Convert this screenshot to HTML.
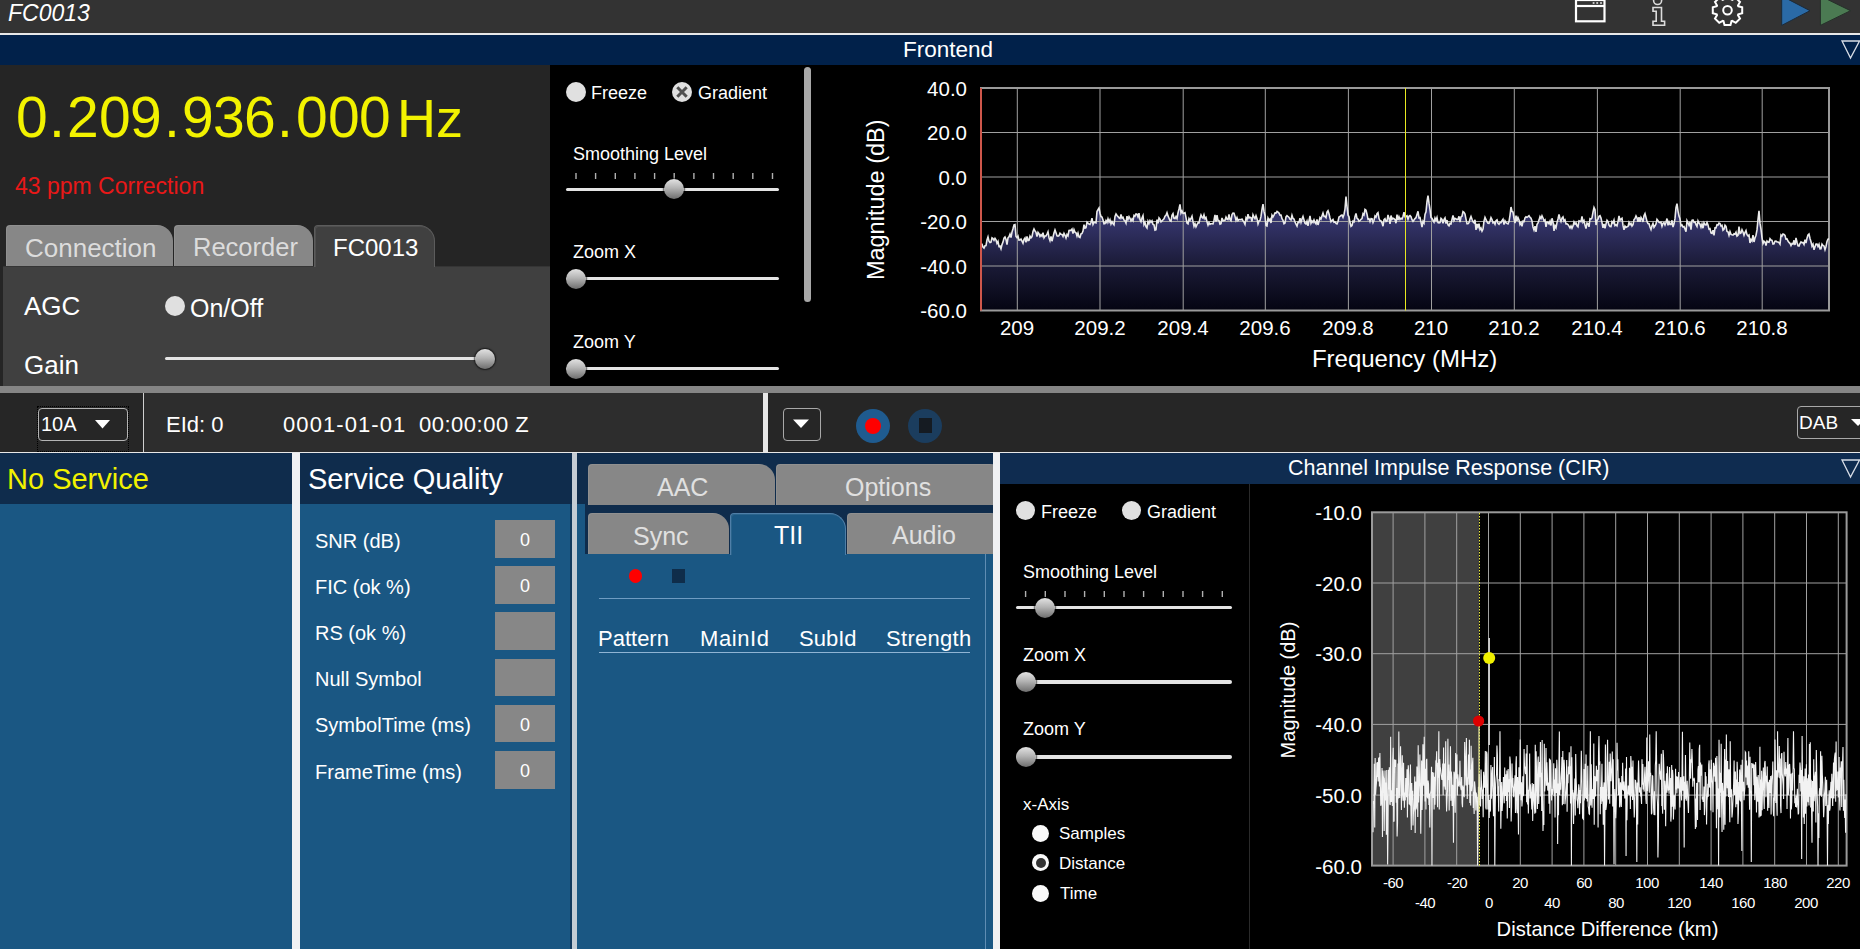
<!DOCTYPE html>
<html><head><meta charset="utf-8">
<style>
*{margin:0;padding:0;box-sizing:border-box}
html,body{width:1860px;height:949px;overflow:hidden;background:#000;font-family:"Liberation Sans",sans-serif;color:#fff}
.a{position:absolute}
.t{position:absolute;white-space:nowrap;line-height:1}
.thumb{position:absolute;width:20px;height:20px;border-radius:50%;background:linear-gradient(#e2e2e2 0%,#b4b4b4 45%,#6e6e6e 100%);box-shadow:0 0 1.5px 1px rgba(0,0,0,.6)}
.track{position:absolute;height:3.4px;background:#e4e4e4;border-radius:2px}
.radio{position:absolute;width:20px;height:20px;border-radius:50%;background:#e0e0e0}
.tab{position:absolute;border-radius:4px 16px 0 0;box-shadow:inset 1px 1px 0 rgba(255,255,255,.08)}
</style></head><body>
<!-- title bar -->
<div class="a" style="left:0;top:0;width:1860px;height:33px;background:#333333"></div>
<div class="t" style="left:8px;top:2px;font-size:23px;font-style:italic">FC0013</div>
<div class="a" style="left:0;top:33px;width:1860px;height:2px;background:#e8e8e8"></div>
<!-- frontend header -->
<div class="a" style="left:0;top:35px;width:1860px;height:30px;background:#01214a"></div>
<div class="t" style="left:903px;top:39px;font-size:22.5px">Frontend</div>

<!-- top left panel -->
<div class="a" style="left:0;top:65px;width:550px;height:321px;background:#252525"></div>
<div class="a" id="freq" style="left:0;top:0;color:#f2f200;font-size:57px"><span class="t" style="left:16px;top:89px">0</span><span class="t" style="left:49px;top:89px">.</span><span class="t" style="left:67px;top:89px">2</span><span class="t" style="left:99px;top:89px">0</span><span class="t" style="left:130px;top:89px">9</span><span class="t" style="left:164px;top:89px">.</span><span class="t" style="left:182px;top:89px">9</span><span class="t" style="left:213px;top:89px">3</span><span class="t" style="left:244px;top:89px">6</span><span class="t" style="left:277px;top:89px">.</span><span class="t" style="left:296px;top:89px">0</span><span class="t" style="left:328px;top:89px">0</span><span class="t" style="left:359px;top:89px">0</span><span class="t" style="left:397px;top:91px;font-size:54px">Hz</span></div>
<div class="t" style="left:15px;top:174.5px;font-size:23px;color:#e81818">43 ppm Correction</div>

<div class="tab" style="left:6px;top:225px;width:167px;height:42px;background:#878787"></div>
<div class="t" style="left:25px;top:234.7px;font-size:26px;color:#dcdcdc">Connection</div>
<div class="tab" style="left:174px;top:225px;width:139px;height:42px;background:#878787"></div>
<div class="t" style="left:193px;top:235px;font-size:25.5px;color:#dcdcdc">Recorder</div>
<div class="a" style="left:3px;top:267px;width:547px;height:119px;background:#404040"></div><div class="a" style="left:3px;top:266px;width:547px;height:1px;background:#353535"></div>
<div class="tab" style="left:314px;top:225px;width:121px;height:42px;background:#404040;border:1px solid #5c5c5c;border-bottom:none"></div>
<div class="t" style="left:333px;top:236.4px;font-size:24px;color:#fff">FC0013</div>

<div class="t" style="left:24px;top:293px;font-size:26px">AGC</div>
<div class="t" style="left:24px;top:351.5px;font-size:26px">Gain</div>
<div class="radio" style="left:165px;top:296px"></div>
<div class="t" style="left:190px;top:296px;font-size:25px">On/Off</div>
<div class="track" style="left:165px;top:357px;width:322px"></div>
<div class="thumb" style="left:475px;top:349px"></div>

<!-- middle controls -->
<div class="a" style="left:550px;top:65px;width:280px;height:321px;background:#000"></div>
<div class="radio" style="left:566px;top:82px"></div>
<div class="t" style="left:591px;top:84px;font-size:18px">Freeze</div>
<div class="radio" style="left:672px;top:82px"></div>
<svg class="a" style="left:672px;top:82px" width="20" height="20"><path d="M5.3 5.3 L14.7 14.7 M14.7 5.3 L5.3 14.7" stroke="#505050" stroke-width="3"/></svg>
<div class="t" style="left:698px;top:84px;font-size:18px">Gradient</div>

<div class="t" style="left:573px;top:145px;font-size:18px">Smoothing Level</div>
<svg class="a" style="left:550px;top:170px" width="240" height="12">
  <g stroke="#b0b0b0" stroke-width="1.4">
  <path d="M26 3v6M45.6 3v6M65.3 3v6M84.9 3v6M104.6 3v6M124.2 3v6M143.9 3v6M163.5 3v6M183.2 3v6M202.8 3v6M222.5 3v6"/>
  </g>
</svg>
<div class="track" style="left:566px;top:188px;width:213px"></div>
<div class="thumb" style="left:664px;top:179px"></div>

<div class="t" style="left:573px;top:242.5px;font-size:18px">Zoom X</div>
<div class="track" style="left:566px;top:277px;width:213px"></div>
<div class="thumb" style="left:566px;top:269px"></div>

<div class="t" style="left:573px;top:333px;font-size:18px">Zoom Y</div>
<div class="track" style="left:566px;top:367px;width:213px"></div>
<div class="thumb" style="left:566px;top:359px"></div>

<div class="a" style="left:804px;top:67px;width:7px;height:235px;background:#a8a8a8;border-radius:4px"></div>

<!-- spectrum -->
<div class="a" style="left:830px;top:65px;width:1030px;height:321px;background:#000"></div>
<svg class="a" style="left:0;top:0" width="1860" height="400">
  <defs>
    <linearGradient id="sg" gradientUnits="userSpaceOnUse" x1="0" y1="88" x2="0" y2="310.5">
      <stop offset="0.5" stop-color="#3a3a76"/>
      <stop offset="0.6" stop-color="#34346a"/>
      <stop offset="0.8" stop-color="#1a1a36"/>
      <stop offset="1" stop-color="#050512"/>
    </linearGradient>
  </defs>
  <path d="M981,310.5 L981,244.1 L982,244.2 L983,247.0 L984,248.0 L985,245.8 L986,245.6 L987,240.0 L988,236.9 L989,241.2 L990,242.5 L991,242.1 L992,237.9 L993,238.6 L994,240.4 L995,238.4 L996,239.9 L997,243.3 L998,241.4 L999,246.5 L1000,246.1 L1001,248.8 L1002,244.6 L1003,242.1 L1004,238.1 L1005,237.0 L1006,239.4 L1007,244.6 L1008,237.9 L1009,236.9 L1010,234.3 L1011,237.6 L1012,232.1 L1013,228.7 L1014,224.8 L1015,224.5 L1016,236.4 L1017,237.7 L1018,236.1 L1019,240.1 L1020,240.0 L1021,239.0 L1022,241.1 L1023,243.2 L1024,239.3 L1025,237.9 L1026,242.3 L1027,236.4 L1028,240.5 L1029,240.3 L1030,236.1 L1031,237.8 L1032,236.7 L1033,231.4 L1034,229.0 L1035,231.0 L1036,232.3 L1037,236.5 L1038,232.3 L1039,233.7 L1040,236.4 L1041,234.8 L1042,236.2 L1043,232.7 L1044,237.8 L1045,236.0 L1046,236.0 L1047,234.0 L1048,231.7 L1049,237.7 L1050,240.6 L1051,236.4 L1052,241.2 L1053,237.1 L1054,233.0 L1055,230.0 L1056,232.7 L1057,235.8 L1058,236.1 L1059,235.6 L1060,233.2 L1061,234.3 L1062,234.5 L1063,236.4 L1064,233.4 L1065,235.3 L1066,237.9 L1067,234.5 L1068,235.8 L1069,230.5 L1070,230.2 L1071,230.3 L1072,229.1 L1073,233.6 L1074,229.6 L1075,232.2 L1076,232.7 L1077,236.1 L1078,233.1 L1079,237.0 L1080,237.6 L1081,233.9 L1082,233.5 L1083,231.0 L1084,224.6 L1085,228.2 L1086,227.7 L1087,222.1 L1088,223.1 L1089,224.0 L1090,224.5 L1091,222.3 L1092,218.1 L1093,224.3 L1094,222.3 L1095,222.4 L1096,222.8 L1097,211.5 L1098,209.6 L1099,208.0 L1100,213.2 L1101,216.6 L1102,217.0 L1103,220.0 L1104,223.8 L1105,223.5 L1106,220.6 L1107,222.6 L1108,218.9 L1109,222.0 L1110,219.7 L1111,223.9 L1112,221.6 L1113,223.5 L1114,224.8 L1115,216.4 L1116,214.0 L1117,215.5 L1118,216.6 L1119,217.9 L1120,218.5 L1121,214.4 L1122,218.2 L1123,217.4 L1124,220.0 L1125,221.0 L1126,223.2 L1127,216.2 L1128,219.4 L1129,216.6 L1130,218.4 L1131,220.8 L1132,218.9 L1133,220.7 L1134,215.4 L1135,216.2 L1136,214.0 L1137,214.2 L1138,216.9 L1139,213.1 L1140,219.7 L1141,221.7 L1142,217.9 L1143,215.6 L1144,224.6 L1145,222.5 L1146,226.7 L1147,228.0 L1148,221.4 L1149,223.6 L1150,220.6 L1151,222.3 L1152,220.9 L1153,224.4 L1154,224.9 L1155,230.1 L1156,229.7 L1157,219.7 L1158,223.4 L1159,217.9 L1160,219.2 L1161,221.9 L1162,220.9 L1163,219.7 L1164,218.7 L1165,216.3 L1166,215.2 L1167,212.7 L1168,215.9 L1169,218.2 L1170,220.7 L1171,221.3 L1172,215.3 L1173,213.6 L1174,218.3 L1175,218.6 L1176,216.6 L1177,218.6 L1178,213.0 L1179,208.9 L1180,204.3 L1181,213.1 L1182,211.0 L1183,213.4 L1184,213.2 L1185,212.7 L1186,217.7 L1187,223.1 L1188,223.8 L1189,218.5 L1190,220.3 L1191,218.5 L1192,216.2 L1193,221.7 L1194,226.2 L1195,223.7 L1196,226.8 L1197,224.7 L1198,222.8 L1199,222.9 L1200,218.3 L1201,215.0 L1202,217.3 L1203,218.1 L1204,214.9 L1205,218.8 L1206,217.5 L1207,221.8 L1208,225.1 L1209,222.6 L1210,224.4 L1211,223.7 L1212,223.7 L1213,223.9 L1214,220.2 L1215,214.9 L1216,221.6 L1217,215.1 L1218,220.4 L1219,220.6 L1220,224.2 L1221,223.7 L1222,217.9 L1223,220.8 L1224,220.4 L1225,220.2 L1226,217.1 L1227,219.1 L1228,219.6 L1229,214.4 L1230,219.6 L1231,220.7 L1232,214.6 L1233,213.1 L1234,213.2 L1235,216.4 L1236,220.3 L1237,217.6 L1238,220.7 L1239,219.5 L1240,219.5 L1241,219.7 L1242,219.1 L1243,220.7 L1244,222.1 L1245,224.3 L1246,217.9 L1247,219.7 L1248,214.1 L1249,218.1 L1250,217.2 L1251,217.7 L1252,221.5 L1253,214.8 L1254,217.0 L1255,218.7 L1256,215.8 L1257,218.7 L1258,223.9 L1259,220.9 L1260,220.4 L1261,216.4 L1262,209.5 L1263,204.1 L1264,211.4 L1265,215.5 L1266,225.5 L1267,226.0 L1268,218.2 L1269,220.4 L1270,219.1 L1271,223.0 L1272,215.2 L1273,216.9 L1274,215.1 L1275,212.9 L1276,213.1 L1277,211.4 L1278,212.2 L1279,213.1 L1280,215.2 L1281,215.1 L1282,218.7 L1283,220.4 L1284,223.7 L1285,223.0 L1286,216.9 L1287,215.7 L1288,216.5 L1289,217.4 L1290,219.3 L1291,220.0 L1292,215.3 L1293,218.4 L1294,219.0 L1295,222.0 L1296,224.2 L1297,226.1 L1298,222.2 L1299,222.5 L1300,218.2 L1301,222.3 L1302,218.9 L1303,216.4 L1304,219.9 L1305,223.2 L1306,224.0 L1307,221.2 L1308,225.9 L1309,220.9 L1310,215.8 L1311,223.2 L1312,221.1 L1313,222.4 L1314,220.0 L1315,222.7 L1316,224.0 L1317,219.3 L1318,224.9 L1319,221.6 L1320,217.7 L1321,219.1 L1322,216.0 L1323,213.1 L1324,216.4 L1325,216.4 L1326,217.6 L1327,212.1 L1328,210.7 L1329,213.7 L1330,218.0 L1331,221.8 L1332,220.6 L1333,219.5 L1334,222.2 L1335,221.9 L1336,223.3 L1337,223.8 L1338,221.5 L1339,217.0 L1340,216.4 L1341,215.5 L1342,215.1 L1343,217.4 L1344,214.5 L1345,209.1 L1346,196.6 L1347,206.5 L1348,215.0 L1349,216.8 L1350,222.8 L1351,226.4 L1352,225.5 L1353,221.2 L1354,221.9 L1355,216.6 L1356,213.4 L1357,218.3 L1358,219.1 L1359,221.3 L1360,220.5 L1361,219.3 L1362,218.6 L1363,213.8 L1364,215.0 L1365,209.5 L1366,210.3 L1367,214.2 L1368,219.3 L1369,218.8 L1370,221.6 L1371,218.6 L1372,218.8 L1373,222.5 L1374,220.2 L1375,216.0 L1376,217.2 L1377,213.7 L1378,212.7 L1379,218.6 L1380,220.6 L1381,221.0 L1382,222.8 L1383,226.2 L1384,219.6 L1385,218.6 L1386,221.5 L1387,221.1 L1388,215.0 L1389,218.1 L1390,223.9 L1391,215.5 L1392,219.3 L1393,218.2 L1394,218.7 L1395,219.6 L1396,223.2 L1397,214.6 L1398,220.1 L1399,216.8 L1400,219.5 L1401,218.3 L1402,219.0 L1403,216.5 L1404,212.3 L1405,216.7 L1406,216.4 L1407,215.8 L1408,219.3 L1409,216.3 L1410,215.5 L1411,216.7 L1412,219.7 L1413,221.4 L1414,220.0 L1415,218.6 L1416,217.7 L1417,214.5 L1418,211.3 L1419,217.9 L1420,217.6 L1421,222.2 L1422,227.1 L1423,221.4 L1424,223.1 L1425,214.5 L1426,211.9 L1427,201.6 L1428,195.6 L1429,203.2 L1430,209.4 L1431,217.5 L1432,218.3 L1433,220.4 L1434,222.2 L1435,218.1 L1436,220.5 L1437,217.6 L1438,222.6 L1439,222.9 L1440,222.6 L1441,218.3 L1442,219.4 L1443,223.4 L1444,219.6 L1445,218.0 L1446,223.5 L1447,220.1 L1448,224.8 L1449,225.8 L1450,223.4 L1451,223.8 L1452,219.5 L1453,215.4 L1454,220.4 L1455,218.3 L1456,218.9 L1457,219.7 L1458,219.3 L1459,216.3 L1460,222.0 L1461,217.0 L1462,216.2 L1463,211.7 L1464,212.4 L1465,214.0 L1466,219.1 L1467,223.7 L1468,223.7 L1469,222.6 L1470,219.1 L1471,216.6 L1472,219.3 L1473,221.7 L1474,222.7 L1475,219.8 L1476,229.8 L1477,223.9 L1478,227.1 L1479,223.7 L1480,229.6 L1481,228.1 L1482,231.1 L1483,229.0 L1484,221.1 L1485,217.4 L1486,219.6 L1487,221.8 L1488,223.2 L1489,223.4 L1490,221.0 L1491,217.6 L1492,219.5 L1493,222.9 L1494,222.2 L1495,224.2 L1496,220.6 L1497,219.8 L1498,223.3 L1499,224.3 L1500,222.5 L1501,222.6 L1502,220.6 L1503,219.2 L1504,224.6 L1505,220.8 L1506,222.6 L1507,223.4 L1508,223.9 L1509,221.6 L1510,215.3 L1511,207.0 L1512,211.5 L1513,212.1 L1514,218.7 L1515,223.2 L1516,215.6 L1517,220.8 L1518,217.5 L1519,219.9 L1520,224.4 L1521,222.6 L1522,226.3 L1523,221.2 L1524,221.7 L1525,217.9 L1526,216.8 L1527,217.4 L1528,216.7 L1529,215.8 L1530,217.2 L1531,218.2 L1532,220.9 L1533,227.0 L1534,230.0 L1535,226.2 L1536,231.8 L1537,224.6 L1538,222.8 L1539,220.1 L1540,216.6 L1541,218.5 L1542,215.9 L1543,218.0 L1544,220.8 L1545,219.9 L1546,226.9 L1547,222.1 L1548,222.3 L1549,223.8 L1550,221.2 L1551,225.5 L1552,218.3 L1553,222.0 L1554,230.8 L1555,225.7 L1556,227.7 L1557,222.6 L1558,219.0 L1559,214.4 L1560,218.8 L1561,221.5 L1562,218.1 L1563,216.9 L1564,221.0 L1565,219.9 L1566,224.0 L1567,223.9 L1568,224.6 L1569,226.2 L1570,228.0 L1571,225.9 L1572,228.3 L1573,226.1 L1574,221.9 L1575,224.0 L1576,222.9 L1577,225.8 L1578,226.8 L1579,220.9 L1580,221.3 L1581,221.7 L1582,216.3 L1583,222.2 L1584,220.6 L1585,225.1 L1586,228.6 L1587,223.0 L1588,223.5 L1589,226.8 L1590,218.6 L1591,219.1 L1592,217.9 L1593,212.2 L1594,207.5 L1595,209.8 L1596,225.0 L1597,220.3 L1598,219.1 L1599,216.2 L1600,215.6 L1601,218.1 L1602,222.7 L1603,227.9 L1604,224.0 L1605,228.4 L1606,223.9 L1607,220.3 L1608,221.7 L1609,225.1 L1610,226.4 L1611,226.6 L1612,221.7 L1613,223.0 L1614,220.1 L1615,225.6 L1616,224.8 L1617,225.9 L1618,221.7 L1619,216.0 L1620,220.3 L1621,219.1 L1622,218.3 L1623,225.4 L1624,229.7 L1625,226.0 L1626,227.4 L1627,226.8 L1628,226.4 L1629,222.5 L1630,224.7 L1631,223.2 L1632,226.0 L1633,224.6 L1634,219.6 L1635,218.5 L1636,216.0 L1637,217.9 L1638,221.8 L1639,217.1 L1640,221.9 L1641,217.3 L1642,219.0 L1643,221.9 L1644,215.8 L1645,213.6 L1646,217.5 L1647,221.4 L1648,223.5 L1649,223.7 L1650,227.0 L1651,229.5 L1652,225.8 L1653,223.5 L1654,227.3 L1655,225.8 L1656,223.9 L1657,219.3 L1658,220.6 L1659,222.4 L1660,222.6 L1661,222.3 L1662,226.2 L1663,223.3 L1664,222.6 L1665,224.9 L1666,222.3 L1667,218.5 L1668,225.3 L1669,222.0 L1670,224.5 L1671,224.5 L1672,220.3 L1673,227.1 L1674,223.8 L1675,218.4 L1676,207.6 L1677,203.6 L1678,211.1 L1679,216.1 L1680,218.8 L1681,225.8 L1682,225.0 L1683,227.0 L1684,226.6 L1685,228.9 L1686,231.8 L1687,220.8 L1688,222.9 L1689,225.2 L1690,222.1 L1691,229.7 L1692,220.4 L1693,220.0 L1694,222.3 L1695,222.0 L1696,224.6 L1697,226.4 L1698,220.9 L1699,223.0 L1700,224.2 L1701,227.2 L1702,224.0 L1703,228.2 L1704,222.8 L1705,224.7 L1706,225.0 L1707,222.5 L1708,225.1 L1709,229.2 L1710,228.7 L1711,232.9 L1712,233.4 L1713,230.2 L1714,235.3 L1715,227.8 L1716,227.9 L1717,224.7 L1718,225.0 L1719,223.0 L1720,223.5 L1721,226.1 L1722,225.4 L1723,230.2 L1724,229.4 L1725,225.2 L1726,226.4 L1727,231.4 L1728,231.8 L1729,235.3 L1730,231.7 L1731,234.4 L1732,234.8 L1733,235.1 L1734,233.7 L1735,234.2 L1736,232.2 L1737,236.1 L1738,235.4 L1739,226.6 L1740,233.5 L1741,233.0 L1742,229.7 L1743,232.0 L1744,235.3 L1745,232.5 L1746,230.5 L1747,234.7 L1748,235.9 L1749,235.1 L1750,242.9 L1751,239.6 L1752,241.0 L1753,235.2 L1754,242.0 L1755,237.9 L1756,235.2 L1757,229.9 L1758,219.6 L1759,210.9 L1760,223.4 L1761,229.1 L1762,237.6 L1763,243.5 L1764,241.3 L1765,242.0 L1766,245.5 L1767,241.0 L1768,242.0 L1769,242.3 L1770,238.8 L1771,240.1 L1772,240.4 L1773,244.0 L1774,243.8 L1775,241.3 L1776,241.2 L1777,241.9 L1778,242.0 L1779,242.6 L1780,244.2 L1781,235.1 L1782,236.1 L1783,234.0 L1784,234.4 L1785,235.5 L1786,239.1 L1787,238.9 L1788,241.1 L1789,242.4 L1790,243.3 L1791,245.6 L1792,243.5 L1793,244.0 L1794,240.3 L1795,245.0 L1796,237.9 L1797,242.2 L1798,245.8 L1799,246.0 L1800,243.5 L1801,241.9 L1802,242.6 L1803,242.6 L1804,244.4 L1805,239.7 L1806,243.0 L1807,238.2 L1808,234.9 L1809,234.0 L1810,238.5 L1811,241.8 L1812,246.2 L1813,244.2 L1814,249.8 L1815,246.8 L1816,244.1 L1817,244.0 L1818,246.5 L1819,244.3 L1820,248.9 L1821,248.7 L1822,244.1 L1823,245.4 L1824,246.0 L1825,249.7 L1826,246.5 L1827,241.4 L1828,239.1 L1829,238.9 L1829,310.5 Z" fill="url(#sg)"/>
  <g stroke="#a0a0a0" stroke-width="1" fill="none">
    <path d="M981 132.5H1829M981 177H1829M981 221.5H1829M981 266H1829"/>
    <path d="M1017.3 88V310.5M1100 88V310.5M1183.2 88V310.5M1265.3 88V310.5M1348.4 88V310.5M1431.5 88V310.5M1514.3 88V310.5M1597.4 88V310.5M1680.2 88V310.5M1762.2 88V310.5"/>
  </g>
  <rect x="981" y="88" width="848" height="222.5" fill="none" stroke="#9a9a9a" stroke-width="2"/>
  <polyline points="981,244.1 982,244.2 983,247.0 984,248.0 985,245.8 986,245.6 987,240.0 988,236.9 989,241.2 990,242.5 991,242.1 992,237.9 993,238.6 994,240.4 995,238.4 996,239.9 997,243.3 998,241.4 999,246.5 1000,246.1 1001,248.8 1002,244.6 1003,242.1 1004,238.1 1005,237.0 1006,239.4 1007,244.6 1008,237.9 1009,236.9 1010,234.3 1011,237.6 1012,232.1 1013,228.7 1014,224.8 1015,224.5 1016,236.4 1017,237.7 1018,236.1 1019,240.1 1020,240.0 1021,239.0 1022,241.1 1023,243.2 1024,239.3 1025,237.9 1026,242.3 1027,236.4 1028,240.5 1029,240.3 1030,236.1 1031,237.8 1032,236.7 1033,231.4 1034,229.0 1035,231.0 1036,232.3 1037,236.5 1038,232.3 1039,233.7 1040,236.4 1041,234.8 1042,236.2 1043,232.7 1044,237.8 1045,236.0 1046,236.0 1047,234.0 1048,231.7 1049,237.7 1050,240.6 1051,236.4 1052,241.2 1053,237.1 1054,233.0 1055,230.0 1056,232.7 1057,235.8 1058,236.1 1059,235.6 1060,233.2 1061,234.3 1062,234.5 1063,236.4 1064,233.4 1065,235.3 1066,237.9 1067,234.5 1068,235.8 1069,230.5 1070,230.2 1071,230.3 1072,229.1 1073,233.6 1074,229.6 1075,232.2 1076,232.7 1077,236.1 1078,233.1 1079,237.0 1080,237.6 1081,233.9 1082,233.5 1083,231.0 1084,224.6 1085,228.2 1086,227.7 1087,222.1 1088,223.1 1089,224.0 1090,224.5 1091,222.3 1092,218.1 1093,224.3 1094,222.3 1095,222.4 1096,222.8 1097,211.5 1098,209.6 1099,208.0 1100,213.2 1101,216.6 1102,217.0 1103,220.0 1104,223.8 1105,223.5 1106,220.6 1107,222.6 1108,218.9 1109,222.0 1110,219.7 1111,223.9 1112,221.6 1113,223.5 1114,224.8 1115,216.4 1116,214.0 1117,215.5 1118,216.6 1119,217.9 1120,218.5 1121,214.4 1122,218.2 1123,217.4 1124,220.0 1125,221.0 1126,223.2 1127,216.2 1128,219.4 1129,216.6 1130,218.4 1131,220.8 1132,218.9 1133,220.7 1134,215.4 1135,216.2 1136,214.0 1137,214.2 1138,216.9 1139,213.1 1140,219.7 1141,221.7 1142,217.9 1143,215.6 1144,224.6 1145,222.5 1146,226.7 1147,228.0 1148,221.4 1149,223.6 1150,220.6 1151,222.3 1152,220.9 1153,224.4 1154,224.9 1155,230.1 1156,229.7 1157,219.7 1158,223.4 1159,217.9 1160,219.2 1161,221.9 1162,220.9 1163,219.7 1164,218.7 1165,216.3 1166,215.2 1167,212.7 1168,215.9 1169,218.2 1170,220.7 1171,221.3 1172,215.3 1173,213.6 1174,218.3 1175,218.6 1176,216.6 1177,218.6 1178,213.0 1179,208.9 1180,204.3 1181,213.1 1182,211.0 1183,213.4 1184,213.2 1185,212.7 1186,217.7 1187,223.1 1188,223.8 1189,218.5 1190,220.3 1191,218.5 1192,216.2 1193,221.7 1194,226.2 1195,223.7 1196,226.8 1197,224.7 1198,222.8 1199,222.9 1200,218.3 1201,215.0 1202,217.3 1203,218.1 1204,214.9 1205,218.8 1206,217.5 1207,221.8 1208,225.1 1209,222.6 1210,224.4 1211,223.7 1212,223.7 1213,223.9 1214,220.2 1215,214.9 1216,221.6 1217,215.1 1218,220.4 1219,220.6 1220,224.2 1221,223.7 1222,217.9 1223,220.8 1224,220.4 1225,220.2 1226,217.1 1227,219.1 1228,219.6 1229,214.4 1230,219.6 1231,220.7 1232,214.6 1233,213.1 1234,213.2 1235,216.4 1236,220.3 1237,217.6 1238,220.7 1239,219.5 1240,219.5 1241,219.7 1242,219.1 1243,220.7 1244,222.1 1245,224.3 1246,217.9 1247,219.7 1248,214.1 1249,218.1 1250,217.2 1251,217.7 1252,221.5 1253,214.8 1254,217.0 1255,218.7 1256,215.8 1257,218.7 1258,223.9 1259,220.9 1260,220.4 1261,216.4 1262,209.5 1263,204.1 1264,211.4 1265,215.5 1266,225.5 1267,226.0 1268,218.2 1269,220.4 1270,219.1 1271,223.0 1272,215.2 1273,216.9 1274,215.1 1275,212.9 1276,213.1 1277,211.4 1278,212.2 1279,213.1 1280,215.2 1281,215.1 1282,218.7 1283,220.4 1284,223.7 1285,223.0 1286,216.9 1287,215.7 1288,216.5 1289,217.4 1290,219.3 1291,220.0 1292,215.3 1293,218.4 1294,219.0 1295,222.0 1296,224.2 1297,226.1 1298,222.2 1299,222.5 1300,218.2 1301,222.3 1302,218.9 1303,216.4 1304,219.9 1305,223.2 1306,224.0 1307,221.2 1308,225.9 1309,220.9 1310,215.8 1311,223.2 1312,221.1 1313,222.4 1314,220.0 1315,222.7 1316,224.0 1317,219.3 1318,224.9 1319,221.6 1320,217.7 1321,219.1 1322,216.0 1323,213.1 1324,216.4 1325,216.4 1326,217.6 1327,212.1 1328,210.7 1329,213.7 1330,218.0 1331,221.8 1332,220.6 1333,219.5 1334,222.2 1335,221.9 1336,223.3 1337,223.8 1338,221.5 1339,217.0 1340,216.4 1341,215.5 1342,215.1 1343,217.4 1344,214.5 1345,209.1 1346,196.6 1347,206.5 1348,215.0 1349,216.8 1350,222.8 1351,226.4 1352,225.5 1353,221.2 1354,221.9 1355,216.6 1356,213.4 1357,218.3 1358,219.1 1359,221.3 1360,220.5 1361,219.3 1362,218.6 1363,213.8 1364,215.0 1365,209.5 1366,210.3 1367,214.2 1368,219.3 1369,218.8 1370,221.6 1371,218.6 1372,218.8 1373,222.5 1374,220.2 1375,216.0 1376,217.2 1377,213.7 1378,212.7 1379,218.6 1380,220.6 1381,221.0 1382,222.8 1383,226.2 1384,219.6 1385,218.6 1386,221.5 1387,221.1 1388,215.0 1389,218.1 1390,223.9 1391,215.5 1392,219.3 1393,218.2 1394,218.7 1395,219.6 1396,223.2 1397,214.6 1398,220.1 1399,216.8 1400,219.5 1401,218.3 1402,219.0 1403,216.5 1404,212.3 1405,216.7 1406,216.4 1407,215.8 1408,219.3 1409,216.3 1410,215.5 1411,216.7 1412,219.7 1413,221.4 1414,220.0 1415,218.6 1416,217.7 1417,214.5 1418,211.3 1419,217.9 1420,217.6 1421,222.2 1422,227.1 1423,221.4 1424,223.1 1425,214.5 1426,211.9 1427,201.6 1428,195.6 1429,203.2 1430,209.4 1431,217.5 1432,218.3 1433,220.4 1434,222.2 1435,218.1 1436,220.5 1437,217.6 1438,222.6 1439,222.9 1440,222.6 1441,218.3 1442,219.4 1443,223.4 1444,219.6 1445,218.0 1446,223.5 1447,220.1 1448,224.8 1449,225.8 1450,223.4 1451,223.8 1452,219.5 1453,215.4 1454,220.4 1455,218.3 1456,218.9 1457,219.7 1458,219.3 1459,216.3 1460,222.0 1461,217.0 1462,216.2 1463,211.7 1464,212.4 1465,214.0 1466,219.1 1467,223.7 1468,223.7 1469,222.6 1470,219.1 1471,216.6 1472,219.3 1473,221.7 1474,222.7 1475,219.8 1476,229.8 1477,223.9 1478,227.1 1479,223.7 1480,229.6 1481,228.1 1482,231.1 1483,229.0 1484,221.1 1485,217.4 1486,219.6 1487,221.8 1488,223.2 1489,223.4 1490,221.0 1491,217.6 1492,219.5 1493,222.9 1494,222.2 1495,224.2 1496,220.6 1497,219.8 1498,223.3 1499,224.3 1500,222.5 1501,222.6 1502,220.6 1503,219.2 1504,224.6 1505,220.8 1506,222.6 1507,223.4 1508,223.9 1509,221.6 1510,215.3 1511,207.0 1512,211.5 1513,212.1 1514,218.7 1515,223.2 1516,215.6 1517,220.8 1518,217.5 1519,219.9 1520,224.4 1521,222.6 1522,226.3 1523,221.2 1524,221.7 1525,217.9 1526,216.8 1527,217.4 1528,216.7 1529,215.8 1530,217.2 1531,218.2 1532,220.9 1533,227.0 1534,230.0 1535,226.2 1536,231.8 1537,224.6 1538,222.8 1539,220.1 1540,216.6 1541,218.5 1542,215.9 1543,218.0 1544,220.8 1545,219.9 1546,226.9 1547,222.1 1548,222.3 1549,223.8 1550,221.2 1551,225.5 1552,218.3 1553,222.0 1554,230.8 1555,225.7 1556,227.7 1557,222.6 1558,219.0 1559,214.4 1560,218.8 1561,221.5 1562,218.1 1563,216.9 1564,221.0 1565,219.9 1566,224.0 1567,223.9 1568,224.6 1569,226.2 1570,228.0 1571,225.9 1572,228.3 1573,226.1 1574,221.9 1575,224.0 1576,222.9 1577,225.8 1578,226.8 1579,220.9 1580,221.3 1581,221.7 1582,216.3 1583,222.2 1584,220.6 1585,225.1 1586,228.6 1587,223.0 1588,223.5 1589,226.8 1590,218.6 1591,219.1 1592,217.9 1593,212.2 1594,207.5 1595,209.8 1596,225.0 1597,220.3 1598,219.1 1599,216.2 1600,215.6 1601,218.1 1602,222.7 1603,227.9 1604,224.0 1605,228.4 1606,223.9 1607,220.3 1608,221.7 1609,225.1 1610,226.4 1611,226.6 1612,221.7 1613,223.0 1614,220.1 1615,225.6 1616,224.8 1617,225.9 1618,221.7 1619,216.0 1620,220.3 1621,219.1 1622,218.3 1623,225.4 1624,229.7 1625,226.0 1626,227.4 1627,226.8 1628,226.4 1629,222.5 1630,224.7 1631,223.2 1632,226.0 1633,224.6 1634,219.6 1635,218.5 1636,216.0 1637,217.9 1638,221.8 1639,217.1 1640,221.9 1641,217.3 1642,219.0 1643,221.9 1644,215.8 1645,213.6 1646,217.5 1647,221.4 1648,223.5 1649,223.7 1650,227.0 1651,229.5 1652,225.8 1653,223.5 1654,227.3 1655,225.8 1656,223.9 1657,219.3 1658,220.6 1659,222.4 1660,222.6 1661,222.3 1662,226.2 1663,223.3 1664,222.6 1665,224.9 1666,222.3 1667,218.5 1668,225.3 1669,222.0 1670,224.5 1671,224.5 1672,220.3 1673,227.1 1674,223.8 1675,218.4 1676,207.6 1677,203.6 1678,211.1 1679,216.1 1680,218.8 1681,225.8 1682,225.0 1683,227.0 1684,226.6 1685,228.9 1686,231.8 1687,220.8 1688,222.9 1689,225.2 1690,222.1 1691,229.7 1692,220.4 1693,220.0 1694,222.3 1695,222.0 1696,224.6 1697,226.4 1698,220.9 1699,223.0 1700,224.2 1701,227.2 1702,224.0 1703,228.2 1704,222.8 1705,224.7 1706,225.0 1707,222.5 1708,225.1 1709,229.2 1710,228.7 1711,232.9 1712,233.4 1713,230.2 1714,235.3 1715,227.8 1716,227.9 1717,224.7 1718,225.0 1719,223.0 1720,223.5 1721,226.1 1722,225.4 1723,230.2 1724,229.4 1725,225.2 1726,226.4 1727,231.4 1728,231.8 1729,235.3 1730,231.7 1731,234.4 1732,234.8 1733,235.1 1734,233.7 1735,234.2 1736,232.2 1737,236.1 1738,235.4 1739,226.6 1740,233.5 1741,233.0 1742,229.7 1743,232.0 1744,235.3 1745,232.5 1746,230.5 1747,234.7 1748,235.9 1749,235.1 1750,242.9 1751,239.6 1752,241.0 1753,235.2 1754,242.0 1755,237.9 1756,235.2 1757,229.9 1758,219.6 1759,210.9 1760,223.4 1761,229.1 1762,237.6 1763,243.5 1764,241.3 1765,242.0 1766,245.5 1767,241.0 1768,242.0 1769,242.3 1770,238.8 1771,240.1 1772,240.4 1773,244.0 1774,243.8 1775,241.3 1776,241.2 1777,241.9 1778,242.0 1779,242.6 1780,244.2 1781,235.1 1782,236.1 1783,234.0 1784,234.4 1785,235.5 1786,239.1 1787,238.9 1788,241.1 1789,242.4 1790,243.3 1791,245.6 1792,243.5 1793,244.0 1794,240.3 1795,245.0 1796,237.9 1797,242.2 1798,245.8 1799,246.0 1800,243.5 1801,241.9 1802,242.6 1803,242.6 1804,244.4 1805,239.7 1806,243.0 1807,238.2 1808,234.9 1809,234.0 1810,238.5 1811,241.8 1812,246.2 1813,244.2 1814,249.8 1815,246.8 1816,244.1 1817,244.0 1818,246.5 1819,244.3 1820,248.9 1821,248.7 1822,244.1 1823,245.4 1824,246.0 1825,249.7 1826,246.5 1827,241.4 1828,239.1 1829,238.9" fill="none" stroke="#eaeaea" stroke-width="1.6"/>
  <path d="M981 88V310.5" stroke="#e04030" stroke-width="1.5"/>
  <path d="M1405.5 88V310.5" stroke="#e8e820" stroke-width="1"/>
</svg>
<div style="position:absolute;left:0;top:0;font-size:20.5px">
  <div class="t" style="left:902px;top:79px;width:65px;text-align:right">40.0</div>
  <div class="t" style="left:902px;top:123px;width:65px;text-align:right">20.0</div>
  <div class="t" style="left:902px;top:168px;width:65px;text-align:right">0.0</div>
  <div class="t" style="left:902px;top:212px;width:65px;text-align:right">-20.0</div>
  <div class="t" style="left:902px;top:257px;width:65px;text-align:right">-40.0</div>
  <div class="t" style="left:902px;top:301px;width:65px;text-align:right">-60.0</div>
  <div class="t" style="left:977px;top:318px;width:80px;text-align:center">209</div>
  <div class="t" style="left:1060px;top:318px;width:80px;text-align:center">209.2</div>
  <div class="t" style="left:1143px;top:318px;width:80px;text-align:center">209.4</div>
  <div class="t" style="left:1225px;top:318px;width:80px;text-align:center">209.6</div>
  <div class="t" style="left:1308px;top:318px;width:80px;text-align:center">209.8</div>
  <div class="t" style="left:1391px;top:318px;width:80px;text-align:center">210</div>
  <div class="t" style="left:1474px;top:318px;width:80px;text-align:center">210.2</div>
  <div class="t" style="left:1557px;top:318px;width:80px;text-align:center">210.4</div>
  <div class="t" style="left:1640px;top:318px;width:80px;text-align:center">210.6</div>
  <div class="t" style="left:1722px;top:318px;width:80px;text-align:center">210.8</div>
</div>
<div class="t" style="left:1254.6px;top:346.5px;width:300px;text-align:center;font-size:24px">Frequency (MHz)</div>
<div class="t" style="left:777px;top:188px;width:200px;text-align:center;font-size:23.5px;transform:rotate(-90deg)">Magnitude (dB)</div>

<!-- splitter -->
<div class="a" style="left:0;top:386px;width:1860px;height:7px;background:#858585"></div>
<!-- toolbar -->
<div class="a" style="left:0;top:393px;width:1860px;height:59px;background:#262626"></div>
<div class="a" style="left:144px;top:393px;width:619px;height:59px;background:#2d2d2d"></div>
<div class="a" style="left:0;top:452px;width:1860px;height:1px;background:#e8e8e8"></div>
<div class="a" style="left:37px;top:406px;width:92px;height:46px;border:1px dotted #000"></div>
<div class="a" style="left:38px;top:408px;width:90px;height:33px;border:1.5px solid #b4b4b4;border-radius:4px"></div>
<div class="t" style="left:41px;top:414px;font-size:20px">10A</div>
<svg class="a" style="left:94px;top:419px" width="18" height="11"><path d="M1 1H16L8.5 9.5Z" fill="#fff"/></svg>
<div class="a" style="left:143px;top:393px;width:1px;height:59px;background:#d0d0d0"></div>
<div class="t" style="left:166px;top:413.5px;font-size:22px">EId: 0</div>
<div class="t" style="left:283px;top:414px;font-size:22px;letter-spacing:1.08px">0001-01-01</div>
<div class="t" style="left:419px;top:414px;font-size:22px;letter-spacing:0.5px">00:00:00 Z</div>
<div class="a" style="left:763px;top:393px;width:5px;height:59px;background:#e6e6e6"></div>
<div class="a" style="left:783px;top:408px;width:38px;height:33px;border:1.5px solid #a8a8a8;border-radius:4px"></div>
<svg class="a" style="left:792px;top:419px" width="18" height="10"><path d="M1 0.5H17L9 9Z" fill="#fff"/></svg>
<div class="a" style="left:856px;top:408.5px;width:34px;height:34px;border-radius:50%;background:#1f5b8f"></div>
<div class="a" style="left:865px;top:417.5px;width:16px;height:16px;border-radius:50%;background:#ff0000"></div>
<div class="a" style="left:908px;top:408.5px;width:34px;height:34px;border-radius:50%;background:#1b3d5e"></div>
<div class="a" style="left:919px;top:418px;width:13px;height:15px;background:#151b22"></div>
<div class="a" style="left:1797px;top:406px;width:80px;height:33px;border:1.5px solid #a8a8a8;border-radius:4px"></div>
<div class="t" style="left:1799px;top:413px;font-size:19px">DAB</div>
<svg class="a" style="left:1850px;top:418px" width="12" height="10"><path d="M1 1H15L8 8Z" fill="#fff"/></svg>

<!-- bottom panels -->
<div class="a" style="left:0;top:453px;width:292px;height:496px;background:#1a5783"></div>
<div class="a" style="left:0;top:453px;width:292px;height:51px;background:#0f2c4c"></div>
<div class="t" style="left:7px;top:464.5px;font-size:29px;color:#f2f200">No Service</div>
<div class="a" style="left:292px;top:453px;width:8px;height:496px;background:#f0f1f3"></div>
<div class="a" style="left:300px;top:453px;width:272px;height:496px;background:#1a5783"></div>
<div class="a" style="left:300px;top:453px;width:272px;height:51px;background:#0f2c4c"></div>
<div class="a" style="left:570px;top:504px;width:2px;height:445px;background:#123a5e"></div>
<div class="t" style="left:308px;top:464.5px;font-size:29px">Service Quality</div>
<div style="position:absolute;left:0;top:0;font-size:20px">
<div class="t" style="left:315px;top:530.5px">SNR (dB)</div>
<div class="t" style="left:315px;top:576.7px">FIC (ok %)</div>
<div class="t" style="left:315px;top:622.9px">RS (ok %)</div>
<div class="t" style="left:315px;top:669.1px">Null Symbol</div>
<div class="t" style="left:315px;top:715.3px">SymbolTime (ms)</div>
<div class="t" style="left:315px;top:761.5px">FrameTime (ms)</div>
</div>
<div style="position:absolute;left:0;top:0;font-family:'Liberation Sans',sans-serif;font-size:18px;color:#fff">
<div class="a" style="left:495px;top:520px;width:60px;height:37.5px;background:#878787"></div>
<div class="a" style="left:495px;top:566.2px;width:60px;height:37.5px;background:#878787"></div>
<div class="a" style="left:495px;top:612.4px;width:60px;height:37.5px;background:#878787"></div>
<div class="a" style="left:495px;top:658.6px;width:60px;height:37.5px;background:#878787"></div>
<div class="a" style="left:495px;top:704.8px;width:60px;height:37.5px;background:#878787"></div>
<div class="a" style="left:495px;top:751px;width:60px;height:37.5px;background:#878787"></div>
<div class="t" style="left:495px;top:531px;width:60px;text-align:center;padding-left:0px">0</div>
<div class="t" style="left:495px;top:577.2px;width:60px;text-align:center;padding-left:0px">0</div>
<div class="t" style="left:495px;top:715.8px;width:60px;text-align:center;padding-left:0px">0</div>
<div class="t" style="left:495px;top:762px;width:60px;text-align:center;padding-left:0px">0</div>
</div>

<div class="a" style="left:572px;top:453px;width:5px;height:496px;background:#c4ccd4"></div>
<div class="a" style="left:577px;top:453px;width:416px;height:496px;background:#1a5783"></div>
<div class="a" style="left:577px;top:453px;width:416px;height:51px;background:#0f2c4c"></div>
<div class="a" style="left:585px;top:504px;width:408px;height:50px;background:#0f2c4c"></div>
<div class="tab" style="left:588px;top:464px;width:187px;height:40.5px;background:#878787"></div>
<div class="tab" style="left:776px;top:464px;width:230px;height:40.5px;background:#878787"></div>
<div class="tab" style="left:588px;top:513px;width:141px;height:41px;background:#878787"></div>
<div class="tab" style="left:730px;top:513px;width:116px;height:42px;background:#1a5783;border:1px solid #4f7fa8;border-bottom:none"></div>
<div class="tab" style="left:847px;top:513px;width:160px;height:41px;background:#878787"></div>
<div class="a" style="left:993px;top:453px;width:20px;height:120px;background:#f0f1f3"></div>
<div style="position:absolute;left:0;top:0;font-size:25px;color:#e0e0e0">
<div class="t" style="left:657px;top:474.8px">AAC</div>
<div class="t" style="left:845px;top:474.6px">Options</div>
<div class="t" style="left:633px;top:523.8px">Sync</div>
<div class="t" style="left:774px;top:523px;color:#fff">TII</div>
<div class="t" style="left:892px;top:523px">Audio</div>
</div>
<div class="a" style="left:985px;top:554px;width:1px;height:395px;background:#5f8db3"></div>
<div class="a" style="left:629px;top:569.3px;width:13.4px;height:13.4px;border-radius:50%;background:#ff0000"></div>
<div class="a" style="left:672px;top:569px;width:13px;height:14px;background:#0f2d4a"></div>
<div class="a" style="left:599px;top:598px;width:371px;height:1px;background:#6f9cc2"></div>
<div style="position:absolute;left:0;top:0;font-size:22px">
<div class="t" style="left:598px;top:628px">Pattern</div>
<div class="t" style="left:700px;top:628px;letter-spacing:0.6px">MainId</div>
<div class="t" style="left:799px;top:628px">SubId</div>
<div class="t" style="left:886px;top:628px;letter-spacing:0.3px">Strength</div>
</div>
<div class="a" style="left:599px;top:652px;width:371px;height:1px;background:#8fb4d4"></div>

<div class="a" style="left:993px;top:453px;width:7px;height:496px;background:#f0f1f3"></div>
<!-- CIR -->
<div class="a" style="left:1000px;top:453px;width:860px;height:496px;background:#000"></div>
<div class="a" style="left:1000px;top:453px;width:860px;height:31px;background:#0f2c50"></div>
<div class="t" style="left:1288px;top:458px;font-size:21.5px">Channel Impulse Response (CIR)</div>
<svg class="a" style="left:1840px;top:458px" width="20" height="21"><path d="M2 2H19.5L10.5 19Z" fill="none" stroke="#d8dde6" stroke-width="1.3"/></svg>
<svg class="a" style="left:1840px;top:39px" width="20" height="21"><path d="M2 2H19.5L10.5 19Z" fill="none" stroke="#d8dde6" stroke-width="1.3"/></svg>
<div class="a" style="left:1249px;top:484px;width:1px;height:465px;background:#2a2a2a"></div>

<div class="radio" style="left:1016px;top:501px;width:19px;height:19px"></div>
<div class="t" style="left:1041px;top:503px;font-size:18px">Freeze</div>
<div class="radio" style="left:1122px;top:501px;width:19px;height:19px"></div>
<div class="t" style="left:1147px;top:503px;font-size:18px">Gradient</div>
<div class="t" style="left:1023px;top:563px;font-size:18px">Smoothing Level</div>
<svg class="a" style="left:1000px;top:588px" width="240" height="12">
  <g stroke="#b0b0b0" stroke-width="1.4">
  <path d="M25.6 3v6M45.3 3v6M65 3v6M84.6 3v6M104.3 3v6M124 3v6M143.6 3v6M163.3 3v6M183 3v6M202.6 3v6M222.3 3v6"/>
  </g>
</svg>
<div class="track" style="left:1016px;top:605.5px;width:216px"></div>
<div class="thumb" style="left:1034.5px;top:597.5px"></div>
<div class="t" style="left:1023px;top:646px;font-size:18px">Zoom X</div>
<div class="track" style="left:1016px;top:680.2px;width:216px"></div>
<div class="thumb" style="left:1015.6px;top:672.2px"></div>
<div class="t" style="left:1023px;top:720px;font-size:18px">Zoom Y</div>
<div class="track" style="left:1016px;top:755.3px;width:216px"></div>
<div class="thumb" style="left:1015.6px;top:747.3px"></div>
<div class="t" style="left:1023px;top:795.5px;font-size:17px">x-Axis</div>
<div class="radio" style="left:1032.4px;top:824.5px;width:17px;height:17px;background:#fafafa"></div>
<div class="t" style="left:1059px;top:825px;font-size:17px">Samples</div>
<div class="radio" style="left:1032.4px;top:854.2px;width:17px;height:17px;background:#fafafa"></div>
<div class="a" style="left:1035.9px;top:857.7px;width:10px;height:10px;border-radius:50%;background:#333"></div>
<div class="t" style="left:1059px;top:855px;font-size:17px">Distance</div>
<div class="radio" style="left:1032.4px;top:884.5px;width:17px;height:17px;background:#fafafa"></div>
<div class="t" style="left:1060px;top:885px;font-size:17px">Time</div>

<svg class="a" style="left:0;top:0" width="1860" height="949">
  <rect x="1372" y="512.3" width="107" height="353.3" fill="#404040"/>
  <g stroke="#a0a0a0" stroke-width="1" fill="none">
    <path d="M1372 583H1846.6M1372 653.7H1846.6M1372 724.4H1846.6M1372 795.1H1846.6"/>
    <path d="M1393.1 512.3V865.6M1424.9 512.3V865.6M1456.7 512.3V865.6M1488.5 512.3V865.6M1520.3 512.3V865.6M1552.1 512.3V865.6M1583.9 512.3V865.6M1615.7 512.3V865.6M1647.5 512.3V865.6M1679.3 512.3V865.6M1711.1 512.3V865.6M1742.9 512.3V865.6M1774.7 512.3V865.6M1806.5 512.3V865.6M1838.3 512.3V865.6"/>
  </g>
  <rect x="1372" y="512.3" width="474.6" height="353.3" fill="none" stroke="#9a9a9a" stroke-width="2"/>
  <path d="M1479.5 513V866" stroke="#f0f040" stroke-width="1" stroke-dasharray="1.5 1.5"/>
  <polyline points="1373.00,832.2 1373.43,801.1 1373.86,803.9 1374.29,763.8 1374.72,827.5 1375.15,758.1 1375.58,794.6 1376.01,788.0 1376.44,782.9 1376.87,762.5 1377.30,777.1 1377.73,762.0 1378.16,781.5 1378.60,758.3 1379.03,757.9 1379.46,786.4 1379.89,752.9 1380.32,780.8 1380.75,805.8 1381.18,803.9 1381.61,790.5 1382.04,767.9 1382.47,837.1 1382.90,770.6 1383.33,777.0 1383.76,778.5 1384.19,831.1 1384.62,796.8 1385.05,770.6 1385.48,800.5 1385.91,782.4 1386.34,834.8 1386.77,770.1 1387.20,798.4 1387.63,864.4 1388.06,823.4 1388.49,769.7 1388.92,789.4 1389.35,767.2 1389.79,804.0 1390.22,805.1 1390.65,736.8 1391.08,801.9 1391.51,799.3 1391.94,790.2 1392.37,806.0 1392.80,759.1 1393.23,747.8 1393.66,821.7 1394.09,820.9 1394.52,759.5 1394.95,760.8 1395.38,766.9 1395.81,759.8 1396.24,802.7 1396.67,787.9 1397.10,836.4 1397.53,822.8 1397.96,763.5 1398.39,798.6 1398.82,731.5 1399.25,782.8 1399.68,797.9 1400.11,767.4 1400.55,746.2 1400.98,774.0 1401.41,810.1 1401.84,776.5 1402.27,755.2 1402.70,794.8 1403.13,800.7 1403.56,762.8 1403.99,789.9 1404.42,807.7 1404.85,792.4 1405.28,800.4 1405.71,778.1 1406.14,782.0 1406.57,797.2 1407.00,769.3 1407.43,817.5 1407.86,775.7 1408.29,765.3 1408.72,774.7 1409.15,803.8 1409.58,803.9 1410.01,804.5 1410.44,764.6 1410.87,806.9 1411.30,830.1 1411.74,783.1 1412.17,799.7 1412.60,790.8 1413.03,825.6 1413.46,812.4 1413.89,808.9 1414.32,792.0 1414.75,776.5 1415.18,833.1 1415.61,781.4 1416.04,809.4 1416.47,806.9 1416.90,766.6 1417.33,785.9 1417.76,816.9 1418.19,745.2 1418.62,802.6 1419.05,787.5 1419.48,780.1 1419.91,754.4 1420.34,794.0 1420.77,833.7 1421.20,793.5 1421.63,760.6 1422.06,809.9 1422.49,792.0 1422.93,744.2 1423.36,777.6 1423.79,785.6 1424.22,736.8 1424.65,776.7 1425.08,801.6 1425.51,768.8 1425.94,809.4 1426.37,760.4 1426.80,758.8 1427.23,797.1 1427.66,797.7 1428.09,780.6 1428.52,784.0 1428.95,805.1 1429.38,793.7 1429.81,827.6 1430.24,793.5 1430.67,792.9 1431.10,790.1 1431.53,766.7 1431.96,865.6 1432.39,771.9 1432.82,788.2 1433.25,798.1 1433.69,772.6 1434.12,809.4 1434.55,776.7 1434.98,804.8 1435.41,783.0 1435.84,761.8 1436.27,762.5 1436.70,751.3 1437.13,790.6 1437.56,807.3 1437.99,762.7 1438.42,777.8 1438.85,731.3 1439.28,809.6 1439.71,759.0 1440.14,766.4 1440.57,769.2 1441.00,773.7 1441.43,775.9 1441.86,779.4 1442.29,779.6 1442.72,763.4 1443.15,795.2 1443.58,747.5 1444.01,786.6 1444.44,763.5 1444.88,786.3 1445.31,789.6 1445.74,741.3 1446.17,790.9 1446.60,811.4 1447.03,799.5 1447.46,791.1 1447.89,738.7 1448.32,780.0 1448.75,764.5 1449.18,810.5 1449.61,776.9 1450.04,770.1 1450.47,746.2 1450.90,800.7 1451.33,771.5 1451.76,777.9 1452.19,806.0 1452.62,784.8 1453.05,789.9 1453.48,842.8 1453.91,771.7 1454.34,772.9 1454.77,793.6 1455.20,812.7 1455.64,753.0 1456.07,778.7 1456.50,762.8 1456.93,754.4 1457.36,795.4 1457.79,774.3 1458.22,778.0 1458.65,785.7 1459.08,786.2 1459.51,784.4 1459.94,760.7 1460.37,781.7 1460.80,787.6 1461.23,790.2 1461.66,777.1 1462.09,803.3 1462.52,807.2 1462.95,785.4 1463.38,796.3 1463.81,786.9 1464.24,797.3 1464.67,741.9 1465.10,756.2 1465.53,774.8 1465.96,785.5 1466.39,737.9 1466.83,777.5 1467.26,798.9 1467.69,777.9 1468.12,777.9 1468.55,754.4 1468.98,784.7 1469.41,739.8 1469.84,803.0 1470.27,769.6 1470.70,805.6 1471.13,745.8 1471.56,791.3 1471.99,785.6 1472.42,764.7 1472.85,757.7 1473.28,807.9 1473.71,791.7 1474.14,813.9 1474.57,781.4 1475.00,786.5 1475.43,791.7 1475.86,810.4 1476.29,792.5 1476.72,800.2 1477.15,796.5 1477.59,865.6 1478.02,828.5 1478.45,786.8 1478.88,793.2 1479.31,773.9 1479.74,804.5 1480.17,787.4 1480.60,806.4 1481.03,769.6 1481.46,782.2 1481.89,787.8 1482.32,799.1 1482.75,789.6 1483.18,817.3 1483.61,771.7 1484.04,778.2 1484.47,787.6 1484.90,784.3 1485.33,751.0 1485.76,807.5 1486.19,809.4 1486.62,751.5 1487.05,754.3 1487.48,787.8 1487.91,809.4 1488.34,797.9 1488.78,794.9 1489.21,817.9 1489.64,799.9 1490.07,811.5 1490.50,810.0 1490.93,764.9 1491.36,798.8 1491.79,785.9 1492.22,771.0 1492.65,767.1 1493.08,798.3 1493.51,816.3 1493.94,801.8 1494.37,757.1 1494.80,865.6 1495.23,807.7 1495.66,784.3 1496.09,778.3 1496.52,774.2 1496.95,745.6 1497.38,755.3 1497.81,795.8 1498.24,786.2 1498.67,811.5 1499.10,779.1 1499.54,781.1 1499.97,731.3 1500.40,782.3 1500.83,828.7 1501.26,798.6 1501.69,782.0 1502.12,811.0 1502.55,802.7 1502.98,792.1 1503.41,777.1 1503.84,787.8 1504.27,803.2 1504.70,767.6 1505.13,795.8 1505.56,794.9 1505.99,774.2 1506.42,801.0 1506.85,770.5 1507.28,818.6 1507.71,785.8 1508.14,769.1 1508.57,792.3 1509.00,779.3 1509.43,808.0 1509.86,756.6 1510.29,761.0 1510.73,779.3 1511.16,821.5 1511.59,806.5 1512.02,763.6 1512.45,787.4 1512.88,778.1 1513.31,792.8 1513.74,797.2 1514.17,788.4 1514.60,784.3 1515.03,775.4 1515.46,813.0 1515.89,764.4 1516.32,756.3 1516.75,808.7 1517.18,813.1 1517.61,776.9 1518.04,798.2 1518.47,834.6 1518.90,767.2 1519.33,781.0 1519.76,794.4 1520.19,739.5 1520.62,781.4 1521.05,800.3 1521.48,782.2 1521.92,806.4 1522.35,800.5 1522.78,776.2 1523.21,796.1 1523.64,793.9 1524.07,749.0 1524.50,766.1 1524.93,767.3 1525.36,773.1 1525.79,774.1 1526.22,753.5 1526.65,802.2 1527.08,745.0 1527.51,804.5 1527.94,789.7 1528.37,813.6 1528.80,791.6 1529.23,784.8 1529.66,753.6 1530.09,798.4 1530.52,784.2 1530.95,792.0 1531.38,800.0 1531.81,809.6 1532.24,783.1 1532.68,821.1 1533.11,793.6 1533.54,783.9 1533.97,798.3 1534.40,805.8 1534.83,813.7 1535.26,744.7 1535.69,812.8 1536.12,751.3 1536.55,771.6 1536.98,792.1 1537.41,808.9 1537.84,762.2 1538.27,756.5 1538.70,804.1 1539.13,790.7 1539.56,762.0 1539.99,777.2 1540.42,741.9 1540.85,796.4 1541.28,772.8 1541.71,810.9 1542.14,739.9 1542.57,799.8 1543.00,831.1 1543.43,811.1 1543.87,825.1 1544.30,743.7 1544.73,791.5 1545.16,784.6 1545.59,771.8 1546.02,747.9 1546.45,785.7 1546.88,762.3 1547.31,773.4 1547.74,790.6 1548.17,782.7 1548.60,783.7 1549.03,803.8 1549.46,758.6 1549.89,813.7 1550.32,759.5 1550.75,764.1 1551.18,786.3 1551.61,800.6 1552.04,789.1 1552.47,794.8 1552.90,789.3 1553.33,778.3 1553.76,763.3 1554.19,796.2 1554.63,779.4 1555.06,817.6 1555.49,768.2 1555.92,781.1 1556.35,793.2 1556.78,759.7 1557.21,769.7 1557.64,844.0 1558.07,783.5 1558.50,815.2 1558.93,764.3 1559.36,731.6 1559.79,795.3 1560.22,782.8 1560.65,789.7 1561.08,776.9 1561.51,770.7 1561.94,757.1 1562.37,805.3 1562.80,751.0 1563.23,804.1 1563.66,778.5 1564.09,759.8 1564.52,769.2 1564.95,804.2 1565.38,799.2 1565.82,794.1 1566.25,785.4 1566.68,760.0 1567.11,811.7 1567.54,774.4 1567.97,783.3 1568.40,766.6 1568.83,774.5 1569.26,752.2 1569.69,774.0 1570.12,766.2 1570.55,803.4 1570.98,746.3 1571.41,865.6 1571.84,757.2 1572.27,789.9 1572.70,790.3 1573.13,804.9 1573.56,824.0 1573.99,792.4 1574.42,798.9 1574.85,778.5 1575.28,815.6 1575.71,754.0 1576.14,778.6 1576.58,789.6 1577.01,799.4 1577.44,801.0 1577.87,808.3 1578.30,795.9 1578.73,784.2 1579.16,788.1 1579.59,814.3 1580.02,790.0 1580.45,803.3 1580.88,781.0 1581.31,750.8 1581.74,771.1 1582.17,791.0 1582.60,818.8 1583.03,814.3 1583.46,820.1 1583.89,769.0 1584.32,800.6 1584.75,783.0 1585.18,763.7 1585.61,798.3 1586.04,754.6 1586.47,798.9 1586.90,791.6 1587.33,801.4 1587.77,765.8 1588.20,806.1 1588.63,808.4 1589.06,813.8 1589.49,814.2 1589.92,774.4 1590.35,731.3 1590.78,805.4 1591.21,764.2 1591.64,791.1 1592.07,807.7 1592.50,790.2 1592.93,789.3 1593.36,799.0 1593.79,743.4 1594.22,824.7 1594.65,776.3 1595.08,777.3 1595.51,796.6 1595.94,781.2 1596.37,765.7 1596.80,781.1 1597.23,775.5 1597.66,769.7 1598.09,827.4 1598.53,753.0 1598.96,736.0 1599.39,763.6 1599.82,762.9 1600.25,814.2 1600.68,786.9 1601.11,803.9 1601.54,785.2 1601.97,763.8 1602.40,801.4 1602.83,787.1 1603.26,824.8 1603.69,787.7 1604.12,782.4 1604.55,865.6 1604.98,802.8 1605.41,744.4 1605.84,810.0 1606.27,806.6 1606.70,801.5 1607.13,758.9 1607.56,739.8 1607.99,777.3 1608.42,799.5 1608.85,793.4 1609.28,761.8 1609.72,803.7 1610.15,753.5 1610.58,764.8 1611.01,781.3 1611.44,770.6 1611.87,768.4 1612.30,751.4 1612.73,806.6 1613.16,759.3 1613.59,792.3 1614.02,864.2 1614.45,806.4 1614.88,788.9 1615.31,805.3 1615.74,818.2 1616.17,804.3 1616.60,787.0 1617.03,742.7 1617.46,770.6 1617.89,759.2 1618.32,795.3 1618.75,786.0 1619.18,778.3 1619.61,807.3 1620.04,805.3 1620.47,782.3 1620.91,791.1 1621.34,806.9 1621.77,776.1 1622.20,789.9 1622.63,762.7 1623.06,784.5 1623.49,790.7 1623.92,781.6 1624.35,788.0 1624.78,798.5 1625.21,792.9 1625.64,768.5 1626.07,855.9 1626.50,757.1 1626.93,820.2 1627.36,792.7 1627.79,793.1 1628.22,785.6 1628.65,793.9 1629.08,795.2 1629.51,767.7 1629.94,780.6 1630.37,809.1 1630.80,756.1 1631.23,763.2 1631.67,796.5 1632.10,766.7 1632.53,799.9 1632.96,760.5 1633.39,789.0 1633.82,801.4 1634.25,817.5 1634.68,806.2 1635.11,780.3 1635.54,780.6 1635.97,783.6 1636.40,796.1 1636.83,861.9 1637.26,782.4 1637.69,824.5 1638.12,779.2 1638.55,760.4 1638.98,778.5 1639.41,792.6 1639.84,788.2 1640.27,787.2 1640.70,796.0 1641.13,796.7 1641.56,803.9 1641.99,759.2 1642.42,784.7 1642.86,764.1 1643.29,789.6 1643.72,782.8 1644.15,791.6 1644.58,774.5 1645.01,766.8 1645.44,779.3 1645.87,798.6 1646.30,804.0 1646.73,737.5 1647.16,790.3 1647.59,790.5 1648.02,778.2 1648.45,761.3 1648.88,773.0 1649.31,792.8 1649.74,734.5 1650.17,776.0 1650.60,772.7 1651.03,788.0 1651.46,814.3 1651.89,812.6 1652.32,775.7 1652.75,776.0 1653.18,793.5 1653.62,809.2 1654.05,814.9 1654.48,791.3 1654.91,815.2 1655.34,765.3 1655.77,759.9 1656.20,731.3 1656.63,765.7 1657.06,796.9 1657.49,802.8 1657.92,857.5 1658.35,835.3 1658.78,788.1 1659.21,763.8 1659.64,771.4 1660.07,771.9 1660.50,779.8 1660.93,770.3 1661.36,753.7 1661.79,805.9 1662.22,802.7 1662.65,813.8 1663.08,750.0 1663.51,756.8 1663.94,771.4 1664.37,809.7 1664.81,780.7 1665.24,789.3 1665.67,826.2 1666.10,788.3 1666.53,773.3 1666.96,792.7 1667.39,766.2 1667.82,779.2 1668.25,790.6 1668.68,786.7 1669.11,793.7 1669.54,767.1 1669.97,790.1 1670.40,778.1 1670.83,821.6 1671.26,815.8 1671.69,765.1 1672.12,806.8 1672.55,769.9 1672.98,775.4 1673.41,819.4 1673.84,804.4 1674.27,795.2 1674.70,801.7 1675.13,809.4 1675.57,768.7 1676.00,789.4 1676.43,776.2 1676.86,793.5 1677.29,777.9 1677.72,776.7 1678.15,788.5 1678.58,772.0 1679.01,783.4 1679.44,794.0 1679.87,807.4 1680.30,780.8 1680.73,777.0 1681.16,789.8 1681.59,800.6 1682.02,772.8 1682.45,731.7 1682.88,790.8 1683.31,777.2 1683.74,776.3 1684.17,847.4 1684.60,781.7 1685.03,799.3 1685.46,755.0 1685.89,789.7 1686.32,800.8 1686.76,789.0 1687.19,780.8 1687.62,796.2 1688.05,804.7 1688.48,813.0 1688.91,789.1 1689.34,779.5 1689.77,742.6 1690.20,769.4 1690.63,778.6 1691.06,759.2 1691.49,762.7 1691.92,749.1 1692.35,761.4 1692.78,786.8 1693.21,778.9 1693.64,780.5 1694.07,777.9 1694.50,780.1 1694.93,800.9 1695.36,828.9 1695.79,798.6 1696.22,827.3 1696.65,782.9 1697.08,784.2 1697.52,819.9 1697.95,769.8 1698.38,766.0 1698.81,782.3 1699.24,749.0 1699.67,744.7 1700.10,809.9 1700.53,762.4 1700.96,774.4 1701.39,775.5 1701.82,764.5 1702.25,799.6 1702.68,796.9 1703.11,801.9 1703.54,800.3 1703.97,786.4 1704.40,815.1 1704.83,806.5 1705.26,772.1 1705.69,785.8 1706.12,776.2 1706.55,824.4 1706.98,801.0 1707.41,796.1 1707.84,783.7 1708.27,796.8 1708.71,764.6 1709.14,760.4 1709.57,787.6 1710.00,784.1 1710.43,769.3 1710.86,810.6 1711.29,759.8 1711.72,774.6 1712.15,781.1 1712.58,783.5 1713.01,812.2 1713.44,762.8 1713.87,764.3 1714.30,776.4 1714.73,765.8 1715.16,781.8 1715.59,757.8 1716.02,784.9 1716.45,828.3 1716.88,756.0 1717.31,782.1 1717.74,809.2 1718.17,788.5 1718.60,865.6 1719.03,739.8 1719.46,773.8 1719.90,817.6 1720.33,772.8 1720.76,792.8 1721.19,743.7 1721.62,806.7 1722.05,832.0 1722.48,782.9 1722.91,791.7 1723.34,793.2 1723.77,829.7 1724.20,775.3 1724.63,748.9 1725.06,824.8 1725.49,759.4 1725.92,796.4 1726.35,734.5 1726.78,775.1 1727.21,788.3 1727.64,760.9 1728.07,788.7 1728.50,796.9 1728.93,769.3 1729.36,795.2 1729.79,822.3 1730.22,741.3 1730.66,791.8 1731.09,797.3 1731.52,789.2 1731.95,817.4 1732.38,813.0 1732.81,804.5 1733.24,795.4 1733.67,782.8 1734.10,760.5 1734.53,795.0 1734.96,773.9 1735.39,771.6 1735.82,807.3 1736.25,779.5 1736.68,804.3 1737.11,761.8 1737.54,774.7 1737.97,824.1 1738.40,812.8 1738.83,781.9 1739.26,800.6 1739.69,769.4 1740.12,786.9 1740.55,801.6 1740.98,764.7 1741.41,802.8 1741.85,851.0 1742.28,759.7 1742.71,790.7 1743.14,790.9 1743.57,781.7 1744.00,800.3 1744.43,793.7 1744.86,787.7 1745.29,751.9 1745.72,752.6 1746.15,777.5 1746.58,760.5 1747.01,785.3 1747.44,776.3 1747.87,765.6 1748.30,787.7 1748.73,751.2 1749.16,787.3 1749.59,809.7 1750.02,756.7 1750.45,793.1 1750.88,790.8 1751.31,862.1 1751.74,763.1 1752.17,767.0 1752.61,767.4 1753.04,763.6 1753.47,766.3 1753.90,785.3 1754.33,764.5 1754.76,800.1 1755.19,791.8 1755.62,761.9 1756.05,776.0 1756.48,812.6 1756.91,776.7 1757.34,788.2 1757.77,801.7 1758.20,775.1 1758.63,792.9 1759.06,817.6 1759.49,807.9 1759.92,746.8 1760.35,816.5 1760.78,779.6 1761.21,815.7 1761.64,770.8 1762.07,810.3 1762.50,791.2 1762.93,781.4 1763.36,767.4 1763.80,798.0 1764.23,809.0 1764.66,763.1 1765.09,760.9 1765.52,776.5 1765.95,797.2 1766.38,775.7 1766.81,782.0 1767.24,766.6 1767.67,810.8 1768.10,781.9 1768.53,787.7 1768.96,807.9 1769.39,779.8 1769.82,783.6 1770.25,793.0 1770.68,775.9 1771.11,814.4 1771.54,785.5 1771.97,775.2 1772.40,778.3 1772.83,761.5 1773.26,809.8 1773.69,816.3 1774.12,798.8 1774.56,799.4 1774.99,739.4 1775.42,771.3 1775.85,802.9 1776.28,770.3 1776.71,802.3 1777.14,815.8 1777.57,731.3 1778.00,777.4 1778.43,769.2 1778.86,772.4 1779.29,745.9 1779.72,778.3 1780.15,758.5 1780.58,806.1 1781.01,813.1 1781.44,754.1 1781.87,753.1 1782.30,773.5 1782.73,779.5 1783.16,785.0 1783.59,798.9 1784.02,751.7 1784.45,771.9 1784.88,773.6 1785.31,776.4 1785.75,762.1 1786.18,773.6 1786.61,768.5 1787.04,809.1 1787.47,773.5 1787.90,738.0 1788.33,795.3 1788.76,787.1 1789.19,765.4 1789.62,764.0 1790.05,771.1 1790.48,818.6 1790.91,773.7 1791.34,809.4 1791.77,801.8 1792.20,772.7 1792.63,790.6 1793.06,767.2 1793.49,731.3 1793.92,767.9 1794.35,769.0 1794.78,803.3 1795.21,798.0 1795.64,806.9 1796.07,795.6 1796.51,807.5 1796.94,798.3 1797.37,788.8 1797.80,805.6 1798.23,814.4 1798.66,813.2 1799.09,774.7 1799.52,783.1 1799.95,762.6 1800.38,768.2 1800.81,791.6 1801.24,770.1 1801.67,858.9 1802.10,735.9 1802.53,779.2 1802.96,788.9 1803.39,817.6 1803.82,776.3 1804.25,824.0 1804.68,800.9 1805.11,768.5 1805.54,813.7 1805.97,794.7 1806.40,764.2 1806.83,806.4 1807.26,778.3 1807.70,794.9 1808.13,802.3 1808.56,774.5 1808.99,805.4 1809.42,744.0 1809.85,796.7 1810.28,742.2 1810.71,807.5 1811.14,779.8 1811.57,809.8 1812.00,842.8 1812.43,781.0 1812.86,783.0 1813.29,811.4 1813.72,759.2 1814.15,801.2 1814.58,792.5 1815.01,776.3 1815.44,771.7 1815.87,822.5 1816.30,750.0 1816.73,772.4 1817.16,793.4 1817.59,806.1 1818.02,865.6 1818.45,813.2 1818.89,837.9 1819.32,791.6 1819.75,788.1 1820.18,795.5 1820.61,751.2 1821.04,791.4 1821.47,796.7 1821.90,755.7 1822.33,774.5 1822.76,783.4 1823.19,797.2 1823.62,817.2 1824.05,809.2 1824.48,794.5 1824.91,789.0 1825.34,776.8 1825.77,805.9 1826.20,797.2 1826.63,779.7 1827.06,805.7 1827.49,865.6 1827.92,805.2 1828.35,823.9 1828.78,798.2 1829.21,790.2 1829.65,810.7 1830.08,807.9 1830.51,790.4 1830.94,781.9 1831.37,798.2 1831.80,773.8 1832.23,789.0 1832.66,806.0 1833.09,783.5 1833.52,762.4 1833.95,798.6 1834.38,759.6 1834.81,755.1 1835.24,752.6 1835.67,801.8 1836.10,741.6 1836.53,781.9 1836.96,789.7 1837.39,789.2 1837.82,771.6 1838.25,797.4 1838.68,795.0 1839.11,757.1 1839.54,799.7 1839.97,810.4 1840.40,767.5 1840.84,769.4 1841.27,761.2 1841.70,807.1 1842.13,761.4 1842.56,762.9 1842.99,747.0 1843.42,810.8 1843.85,779.7 1844.28,806.5 1844.71,818.0 1845.14,799.5 1845.57,832.7 1846.00,794.3" fill="none" stroke="#f2f2f2" stroke-width="1.1"/>
  <path d="M1479 721V812" stroke="#e8e8a0" stroke-width="1.2"/>
  <path d="M1489.2 638V745" stroke="#f0f0f0" stroke-width="1.3"/>
  <circle cx="1478.6" cy="721" r="5.6" fill="#dd0000"/>
  <circle cx="1489.2" cy="658" r="6" fill="#f0f000"/>
</svg>
<div style="position:absolute;left:0;top:0;font-size:20.5px">
  <div class="t" style="left:1282px;top:503px;width:80px;text-align:right">-10.0</div>
  <div class="t" style="left:1282px;top:573.7px;width:80px;text-align:right">-20.0</div>
  <div class="t" style="left:1282px;top:644.4px;width:80px;text-align:right">-30.0</div>
  <div class="t" style="left:1282px;top:715.1px;width:80px;text-align:right">-40.0</div>
  <div class="t" style="left:1282px;top:785.8px;width:80px;text-align:right">-50.0</div>
  <div class="t" style="left:1282px;top:856.5px;width:80px;text-align:right">-60.0</div>
</div>
<div style="position:absolute;left:0;top:0;font-size:15px;letter-spacing:-0.5px">
  <div class="t" style="left:1363px;top:875px;width:60px;text-align:center">-60</div>
  <div class="t" style="left:1427px;top:875px;width:60px;text-align:center">-20</div>
  <div class="t" style="left:1490px;top:875px;width:60px;text-align:center">20</div>
  <div class="t" style="left:1554px;top:875px;width:60px;text-align:center">60</div>
  <div class="t" style="left:1617px;top:875px;width:60px;text-align:center">100</div>
  <div class="t" style="left:1681px;top:875px;width:60px;text-align:center">140</div>
  <div class="t" style="left:1745px;top:875px;width:60px;text-align:center">180</div>
  <div class="t" style="left:1808px;top:875px;width:60px;text-align:center">220</div>
  <div class="t" style="left:1395px;top:895px;width:60px;text-align:center">-40</div>
  <div class="t" style="left:1459px;top:895px;width:60px;text-align:center">0</div>
  <div class="t" style="left:1522px;top:895px;width:60px;text-align:center">40</div>
  <div class="t" style="left:1586px;top:895px;width:60px;text-align:center">80</div>
  <div class="t" style="left:1649px;top:895px;width:60px;text-align:center">120</div>
  <div class="t" style="left:1713px;top:895px;width:60px;text-align:center">160</div>
  <div class="t" style="left:1776px;top:895px;width:60px;text-align:center">200</div>
</div>
<div class="t" style="left:1457.5px;top:919px;width:300px;text-align:center;font-size:20.2px">Distance Difference (km)</div>
<div class="t" style="left:1188px;top:680px;width:200px;text-align:center;font-size:20px;transform:rotate(-90deg)">Magnitude (dB)</div>

<!-- title icons -->
<svg class="a" style="left:0;top:0" width="1860" height="33">
  <g fill="none" stroke="#fff" stroke-width="2.2">
    <rect x="1576" y="0" width="28.5" height="21.3"/>
    <path d="M1576 6H1604.5"/>
  </g>
  <g fill="#d0d0d0"><circle cx="1593.6" cy="3" r="1.1"/><circle cx="1597.2" cy="3" r="1.1"/><circle cx="1601" cy="3" r="1.1"/></g>
  <g fill="none" stroke="#dcdcdc" stroke-width="1.6">
    <circle cx="1657.6" cy="0.5" r="4"/>
    <path d="M1653 7.5H1661.5V21.3H1664.6V25.3H1653V21.3H1656.2V11.3H1653Z"/>
  </g>
  <path d="M1738.26,6.25 L1742.20,7.32 L1742.20,13.28 L1738.26,14.35 L1737.98,15.05 L1740.00,18.59 L1735.79,22.80 L1732.25,20.78 L1731.55,21.06 L1730.48,25.00 L1724.52,25.00 L1723.45,21.06 L1722.75,20.78 L1719.21,22.80 L1715.00,18.59 L1717.02,15.05 L1716.74,14.35 L1712.80,13.28 L1712.80,7.32 L1716.74,6.25 L1717.02,5.55 L1715.00,2.01 L1719.21,-2.20 L1722.75,-0.18 L1723.45,-0.46 L1724.52,-4.40 L1730.48,-4.40 L1731.55,-0.46 L1732.25,-0.18 L1735.79,-2.20 L1740.00,2.01 L1737.98,5.55Z" fill="none" stroke="#fff" stroke-width="2"/>
  <circle cx="1727.5" cy="10.3" r="4.3" fill="none" stroke="#fff" stroke-width="2"/>
  <path d="M1781.7 -4L1810 10.7L1781.7 25.4Z" fill="#2a6aa6" stroke="#1c2a38" stroke-width="1"/>
  <path d="M1820.4 -4L1850.5 10.7L1820.4 25.4Z" fill="#4b7a52" stroke="#26302a" stroke-width="1"/>
</svg>
</body></html>
